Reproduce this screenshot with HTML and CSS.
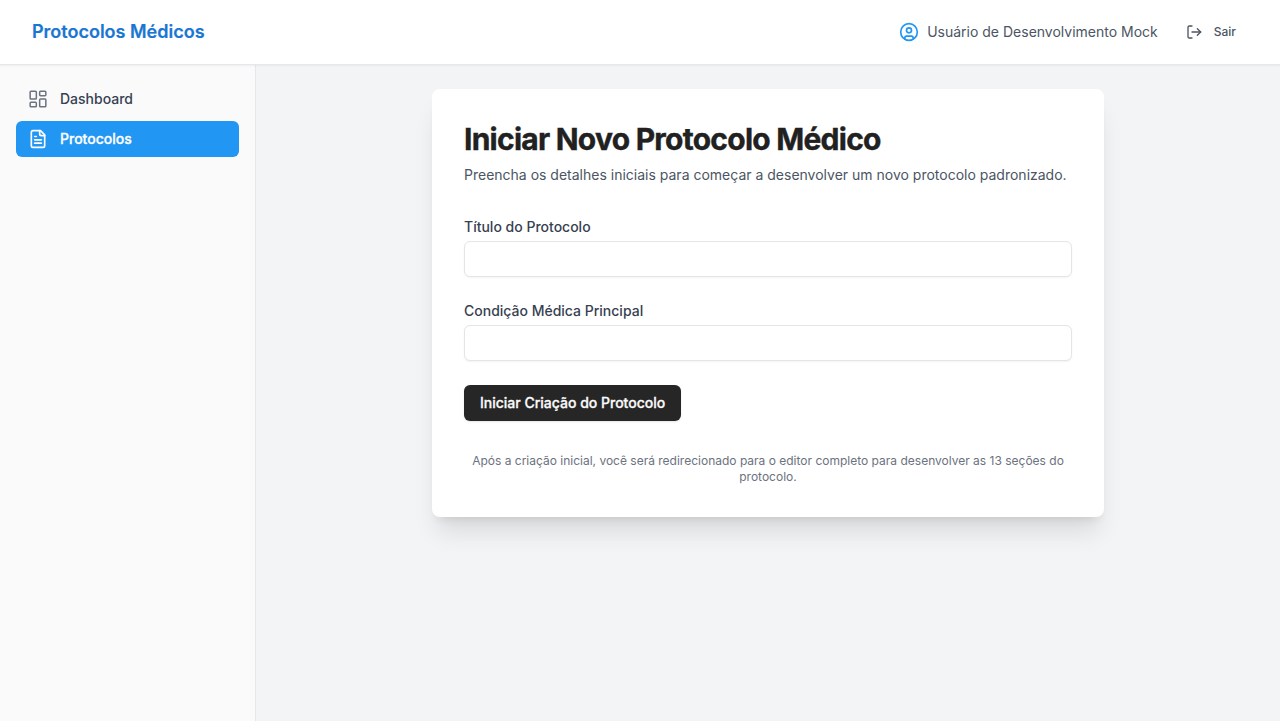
FILE: index.html
```html
<!DOCTYPE html>
<html lang="pt-BR">
<head>
<meta charset="utf-8">
<title>Protocolos Médicos</title>
<link rel="stylesheet" href="styles.css">
</head>
<body>
<header class="topbar">
  <a class="brand">Protocolos Médicos</a>
  <div class="account">
    <div class="user">
      <svg class="icon" viewBox="0 0 24 24"><circle cx="12" cy="12" r="10"/><circle cx="12" cy="10" r="3"/><path d="M7 20.662V19a2 2 0 0 1 2-2h6a2 2 0 0 1 2 2v1.662"/></svg>
      <span>Usuário de Desenvolvimento Mock</span>
    </div>
    <button class="logout">
      <svg class="icon" viewBox="0 0 24 24"><path d="M9 21H5a2 2 0 0 1-2-2V5a2 2 0 0 1 2-2h4"/><path d="m17 17 5-5-5-5"/><path d="M22 12H9"/></svg>
      <span>Sair</span>
    </button>
  </div>
</header>
<div class="shell">
  <nav class="sidebar">
    <a class="nav-item">
      <svg class="icon" viewBox="0 0 24 24"><rect x="2.6" y="2.6" width="7.4" height="9.4" rx="1"/><rect x="14" y="2.6" width="7.4" height="5.4" rx="1"/><rect x="14" y="12" width="7.4" height="9.4" rx="1"/><rect x="2.6" y="16" width="7.4" height="5.4" rx="1"/></svg>
      <span>Dashboard</span>
    </a>
    <a class="nav-item active">
      <svg class="icon" viewBox="0 0 24 24"><path d="M15 2H6a2 2 0 0 0-2 2v16a2 2 0 0 0 2 2h12a2 2 0 0 0 2-2V7Z"/><path d="M14 2v4a2 2 0 0 0 2 2h4"/><path d="M10 9H8"/><path d="M16 13H8"/><path d="M16 17H8"/></svg>
      <span>Protocolos</span>
    </a>
  </nav>
  <main class="content">
    <section class="card">
      <h1 class="title">Iniciar Novo Protocolo Médico</h1>
      <p class="subtitle">Preencha os detalhes iniciais para começar a desenvolver um novo protocolo padronizado.</p>
      <form class="form">
        <div class="field">
          <label class="label" for="titulo">Título do Protocolo</label>
          <input class="input" id="titulo" type="text">
        </div>
        <div class="field">
          <label class="label" for="condicao">Condição Médica Principal</label>
          <input class="input" id="condicao" type="text">
        </div>
        <button class="submit" type="button">Iniciar Criação do Protocolo</button>
      </form>
      <p class="note">Após a criação inicial, você será redirecionado para o editor completo para desenvolver as 13 seções do protocolo.</p>
    </section>
  </main>
</div>
</body>
</html>
```
FILE: styles.css
```css
*, *::before, *::after { box-sizing: border-box; }
body {
  margin: 0;
  height: 100vh;
  display: flex;
  flex-direction: column;
  overflow: hidden;
  background: #f3f4f6;
  color: #212121;
  font: 400 14px/20px Inter, sans-serif;
}
h1, p { margin: 0; }
button { font: inherit; border: 0; }
.icon {
  flex: none;
  width: 20px;
  height: 20px;
  fill: none;
  stroke: currentColor;
  stroke-width: 2;
  stroke-linecap: round;
  stroke-linejoin: round;
}
.topbar {
  position: relative;
  z-index: 1;
  flex: none;
  height: 65px;
  padding: 0 32px;
  display: flex;
  align-items: center;
  justify-content: space-between;
  background: #fff;
  border-bottom: 1px solid #e5e7eb;
  box-shadow: 0 1px 2px rgba(0, 0, 0, 0.05);
}
.brand { color: #1976d2; font-size: 18px; line-height: 28px; font-weight: 600; -webkit-text-stroke: 0.2px; }
.account { display: flex; align-items: center; gap: 16px; }
.user { display: flex; align-items: center; gap: 8px; color: #4b5563; }
.user .icon { color: #2196f3; }
.logout {
  display: flex;
  align-items: center;
  gap: 12px;
  height: 32px;
  padding: 0 12px;
  background: none;
  color: #4b5563;
  font-size: 12px;
  font-weight: 500;
}
.logout .icon { width: 16px; height: 16px; }
.shell { flex: 1; display: flex; min-height: 0; }
.sidebar {
  flex: none;
  width: 256px;
  padding: 16px;
  display: flex;
  flex-direction: column;
  gap: 4px;
  background: #fafafa;
  border-right: 1px solid #e5e7eb;
}
.nav-item {
  display: flex;
  align-items: center;
  gap: 12px;
  height: 36px;
  padding: 0 12px;
  border-radius: 6px;
  color: #374151;
  font-weight: 500;
}
.nav-item .icon { color: #6b7280; stroke-width: 1.8; }
.active { background: #2196f3; color: #fff; -webkit-text-stroke: 0.3px; }
.active .icon { color: #fff; stroke-width: 2; }
.content { flex: 1; padding: 24px; }
.card {
  width: 672px;
  margin: 0 auto;
  padding: 32px;
  background: #fff;
  border-radius: 8px;
  box-shadow: 0 20px 25px -5px rgba(0, 0, 0, 0.1), 0 8px 10px -6px rgba(0, 0, 0, 0.1);
}
.title { font-size: 30px; line-height: 36px; font-weight: 700; letter-spacing: -0.75px; -webkit-text-stroke: 0.4px; }
.subtitle { margin-top: 8px; color: #4b5563; }
.form { margin-top: 32px; display: flex; flex-direction: column; align-items: flex-start; gap: 24px; }
.field { width: 100%; display: flex; flex-direction: column; gap: 4px; }
.label { color: #374151; font-weight: 500; }
.input {
  width: 100%;
  height: 36px;
  padding: 4px 12px;
  border: 1px solid #e5e5e5;
  border-radius: 6px;
  background: #fff;
  font: inherit;
  box-shadow: 0 1px 2px rgba(0, 0, 0, 0.05);
}
.submit {
  height: 36px;
  padding: 0 16px;
  border-radius: 6px;
  background: #262626;
  color: #fafafa;
  font-weight: 500;
  -webkit-text-stroke: 0.3px;
  box-shadow: 0 1px 2px rgba(0, 0, 0, 0.1);
}
.note { margin-top: 32px; color: #6b7280; font-size: 12px; line-height: 16px; text-align: center; }
```
